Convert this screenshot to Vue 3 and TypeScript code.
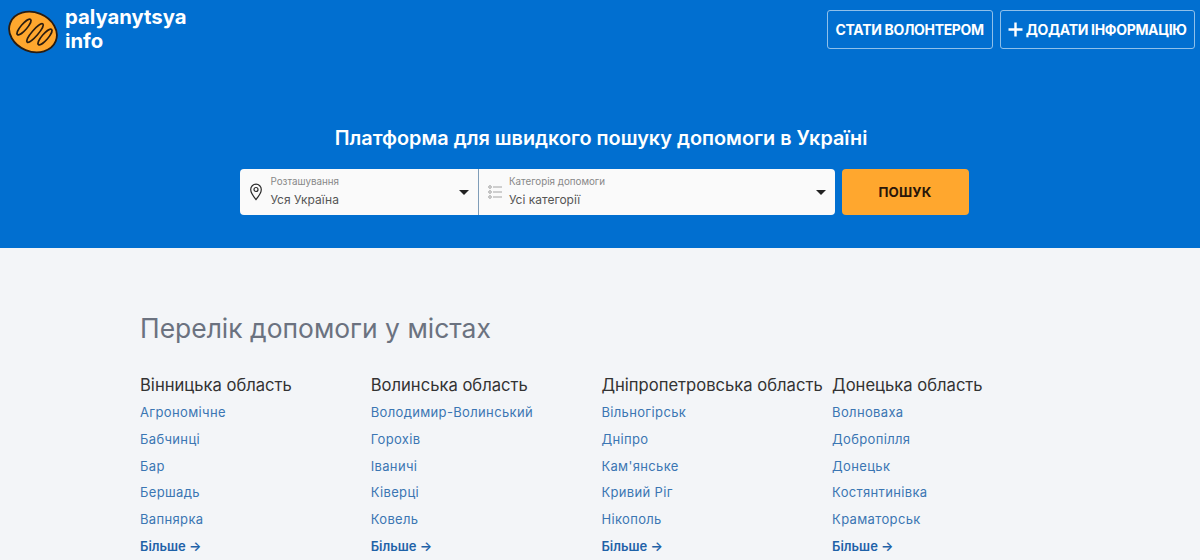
<script setup lang="ts">
type Region = {
  name: string;
  cities: string[];
};

const regions: Region[] = [
  { name: "Вінницька область", cities: ["Агрономічне", "Бабчинці", "Бар", "Бершадь", "Вапнярка"] },
  { name: "Волинська область", cities: ["Володимир-Волинський", "Горохів", "Іваничі", "Ківерці", "Ковель"] },
  { name: "Дніпропетровська область", cities: ["Вільногірськ", "Дніпро", "Кам'янське", "Кривий Ріг", "Нікополь"] },
  { name: "Донецька область", cities: ["Волноваха", "Добропілля", "Донецьк", "Костянтинівка", "Краматорськ"] }
];
</script>

<template>
  <div class="page">
    <header class="hero">
      <div class="topbar">
        <a class="brand" href="#">
          <svg class="brand__logo" width="50" height="44" viewBox="0 0 50 44" aria-hidden="true">
            <ellipse cx="25" cy="22" rx="24.500" ry="19.500" transform="rotate(22 25 22)" fill="#ffa72e" stroke="#2a1c10" stroke-width="1.800" />
            <ellipse cx="16" cy="17" rx="3" ry="10" transform="rotate(41 16 17)" fill="none" stroke="#2a1c10" stroke-width="1.600" />
            <ellipse cx="27" cy="23" rx="3" ry="12" transform="rotate(41 27 23)" fill="none" stroke="#2a1c10" stroke-width="1.600" />
            <ellipse cx="37" cy="27" rx="3" ry="10" transform="rotate(41 37 27)" fill="none" stroke="#2a1c10" stroke-width="1.600" />
          </svg>
          <span class="brand__name">palyanytsya<br />info</span>
        </a>
        <nav class="actions">
          <a class="action" href="#">Стати волонтером</a>
          <a class="action" href="#">
            <svg width="15" height="15" viewBox="0 0 15 15" aria-hidden="true">
              <path d="M7.500 0.500v14M0.500 7.500h14" stroke="#fff" stroke-width="2.400" fill="none" />
            </svg>
            Додати інформацію
          </a>
        </nav>
      </div>

      <h1 class="hero__title">Платформа для швидкого пошуку допомоги в Україні</h1>

      <form class="search" @submit.prevent>
        <div class="search__fields">
          <div class="field field--location">
            <svg class="field__icon" width="14" height="18" viewBox="0 0 14 18" aria-hidden="true">
              <path d="M7 1.200a5.300 5.300 0 0 0-5.300 5.300C1.700 10.200 7 16.500 7 16.500s5.300-6.300 5.300-10A5.300 5.300 0 0 0 7 1.200Z" fill="none" stroke="#2b2b2b" stroke-width="1.200" />
              <circle cx="7" cy="6.500" r="2" fill="none" stroke="#2b2b2b" stroke-width="1.200" />
            </svg>
            <div class="field__copy">
              <span class="field__label">Розташування</span>
              <span class="field__value">Уся Україна</span>
            </div>
            <span class="field__caret"></span>
          </div>
          <div class="field field--category">
            <svg class="field__icon" width="14" height="14" viewBox="0 0 14 14" aria-hidden="true">
              <g fill="none" stroke="#9a9a9a" stroke-width="0.900">
                <circle cx="2" cy="2" r="1.300" />
                <circle cx="2" cy="7" r="1.300" />
                <circle cx="2" cy="12" r="1.300" />
                <path d="M5 2h9M5 7h9M5 12h9" />
              </g>
            </svg>
            <div class="field__copy">
              <span class="field__label">Категорія допомоги</span>
              <span class="field__value">Усі категорії</span>
            </div>
            <span class="field__caret"></span>
          </div>
        </div>
        <button class="search__submit" type="submit">Пошук</button>
      </form>
    </header>

    <main class="cities">
      <h2 class="cities__title">Перелік допомоги у містах</h2>
      <div class="cities__grid">
        <section v-for="region in regions" :key="region.name" class="region">
          <h3 class="region__name">{{ region.name }}</h3>
          <a v-for="city in region.cities" :key="city" class="region__city" href="#">{{ city }}</a>
          <a class="region__more" href="#">Більше →</a>
        </section>
      </div>
    </main>
  </div>
</template>

<style>
html,
body {
  margin: 0;
  background: #f3f5f8;
}
</style>

<style scoped>
.page {
  height: 560px;
  overflow: hidden;
  font-family: Inter, "Noto Sans", sans-serif;
  background: #f3f5f8;
}

a {
  text-decoration: none;
}

.hero {
  height: 248px;
  box-sizing: border-box;
  padding-top: 10px;
  background: #016fd0;
  color: #fff;
}

.topbar {
  display: flex;
  justify-content: space-between;
  align-items: flex-start;
  padding: 0 5px 0 8px;
}

.brand {
  display: flex;
  align-items: flex-start;
  gap: 7px;
  color: #fff;
}

.brand__logo {
  flex: 0 0 auto;
}

.brand__name {
  margin-top: -5px;
  font-size: 20.300px;
  font-weight: 700;
  line-height: 24px;
}

.actions {
  display: flex;
  gap: 7px;
}

.action {
  height: 39px;
  box-sizing: border-box;
  display: flex;
  align-items: center;
  gap: 3px;
  padding: 0 7.500px;
  border: 1px solid #8fc0ea;
  border-radius: 3px;
  color: #fff;
  font-size: 14px;
  font-weight: 700;
  letter-spacing: -0.330px;
  text-transform: uppercase;
}

.action:first-child {
  padding: 0 8px;
}

.action:last-child {
  gap: 2.500px;
}

.hero__title {
  margin: 71px 0 0;
  padding-left: 2px;
  font-size: 19.850px;
  font-weight: 600;
  line-height: 26px;
  text-align: center;
}

.search {
  display: flex;
  justify-content: center;
  gap: 7px;
  margin-top: 18px;
  margin-left: 8px;
}

.search__fields {
  display: flex;
  width: 595px;
  height: 46px;
  border-radius: 4px;
  overflow: hidden;
  background: #fafafa;
}

.field {
  position: relative;
  display: flex;
  align-items: center;
  box-sizing: border-box;
}

.field--location {
  width: 238px;
  padding-left: 9px;
  gap: 8px;
}

.field--category {
  flex: 1;
  padding-left: 9px;
  gap: 7.500px;
  border-left: 1px solid #7f9db8;
}

.field__copy {
  display: grid;
  gap: 2px;
  margin-top: -1px;
}

.field__label {
  color: #888;
  font-size: 9.800px;
  line-height: 14px;
}

.field__value {
  color: #555;
  font-size: 12px;
  line-height: 17px;
}

.field__caret {
  position: absolute;
  top: 21px;
  right: 9px;
  border-top: 5px solid #222;
  border-left: 5px solid transparent;
  border-right: 5px solid transparent;
}

.search__submit {
  width: 127px;
  height: 46px;
  border: 0;
  border-radius: 4px;
  background: #ffa72e;
  color: #2a1608;
  font: inherit;
  font-size: 13.300px;
  font-weight: 700;
  text-transform: uppercase;
  letter-spacing: 0.200px;
}

.cities {
  padding: 62px 140px 0;
}

.cities__title {
  margin: 0;
  color: #6b7280;
  font-size: 26.450px;
  font-weight: 400;
  line-height: 36px;
}

.cities__grid {
  display: grid;
  grid-template-columns: repeat(4, 230.700px);
  margin-top: 27px;
}

.region {
  display: flex;
  flex-direction: column;
  align-items: flex-start;
}

.region__name {
  margin: 0 0 2px;
  color: #333;
  font-size: 16.600px;
  font-weight: 400;
  line-height: 24px;
  white-space: nowrap;
}

.region__city {
  color: #3b76b3;
  font-size: 13px;
  line-height: 26.800px;
  letter-spacing: 0.350px;
}

.region__more {
  color: #1f62a8;
  font-size: 13px;
  font-weight: 600;
  line-height: 26.800px;
}
</style>
